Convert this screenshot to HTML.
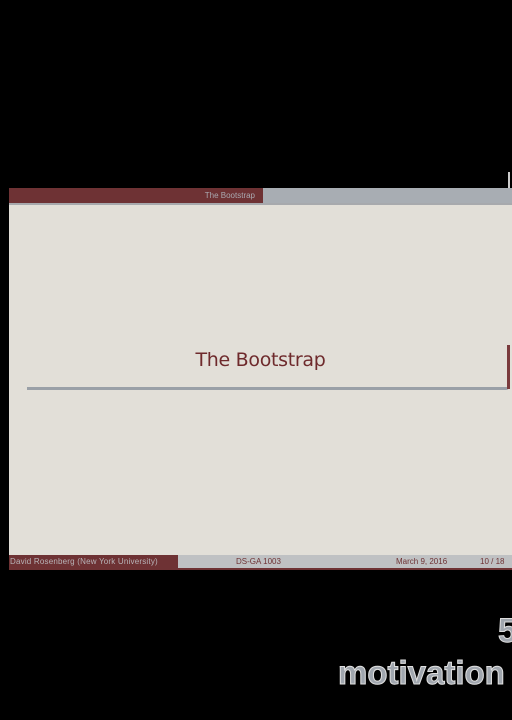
<!DOCTYPE html>
<html><head><style>
body{margin:0;width:512px;height:720px;background:#000;position:relative;overflow:hidden;font-family:"Liberation Sans",sans-serif}
div{position:absolute}
</style></head><body>
<div style="left:9px;top:188px;width:503px;height:380px;background:#e2dfd8"></div>
<div style="left:9px;top:188px;width:254px;height:15px;background:#6e3234;color:#a9a9b0;font-size:8px;line-height:15px;text-align:right;padding-right:8px;box-sizing:border-box">The Bootstrap</div>
<div style="left:263px;top:188px;width:249px;height:15px;background:#a8adb3"></div>
<div style="left:9px;top:203px;width:503px;height:2px;background:#a7a9ad"></div>
<div style="left:508px;top:172px;width:2px;height:16px;background:#ccc"></div>
<div style="left:9px;top:349px;width:503px;text-align:center;color:#6e2a2c;font-size:19px;font-family:'DejaVu Sans',sans-serif;letter-spacing:-0.3px">The Bootstrap</div>
<div style="left:27px;top:387px;width:482px;height:3px;background:#9aa0a7;border-radius:0 0 4px 0"></div>
<div style="left:507px;top:345px;width:3px;height:44px;background:#7a3a3c"></div>
<div style="left:9px;top:555px;width:169px;height:13px;background:#6e3234;color:#b8b4b8;font-size:8px;line-height:13px;padding-left:1px;letter-spacing:0.2px;white-space:nowrap;overflow:hidden">David Rosenberg (New York University)</div>
<div style="left:178px;top:555px;width:334px;height:13px;background:#bfc1c3;color:#6e3234;font-size:8px;line-height:13px"><span style="position:absolute;left:58px">DS-GA 1003</span><span style="position:absolute;left:218px">March 9, 2016</span><span style="position:absolute;left:302px">10 / 18</span></div>
<div style="left:9px;top:568px;width:503px;height:2px;background:#6e3234"></div>
<div style="left:498px;top:612px;color:#a0a6ae;font-size:34px;font-weight:bold;-webkit-text-stroke:1px #ddd">5</div>
<div style="left:338px;top:654px;color:#a0a6ae;font-size:33px;font-weight:bold;-webkit-text-stroke:1px #e0e0e0;letter-spacing:0px">motivation</div>
</body></html>
